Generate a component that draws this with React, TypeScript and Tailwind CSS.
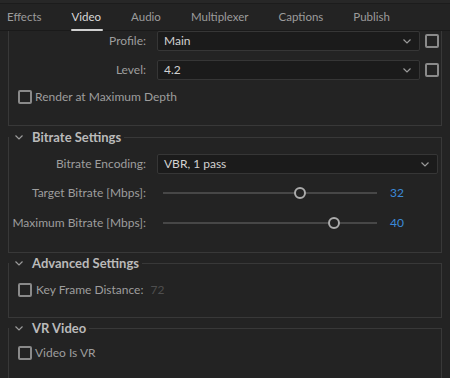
import React from "react";

const font = { fontFamily: "Lato, 'Noto Sans', sans-serif" };

function Chevron({ className = "" }: { className?: string }) {
  return (
    <svg width="8" height="5" viewBox="0 0 8 5" className={className}>
      <path d="M0.5 0.5 L4 4 L7.5 0.5" fill="none" stroke="#9a9a9a" strokeWidth="1.2" />
    </svg>
  );
}

function Checkbox() {
  return <div className="w-[14px] h-[14px] shrink-0 rounded-[2px] border-2 border-[#8a8a8a]" />;
}

function Select({ value, className = "" }: { value: string; className?: string }) {
  return (
    <div
      className={
        "h-[20px] flex items-center justify-between bg-[#1b1b1b] border border-[#363636] rounded-[2px] pl-[6px] pr-[8px] " +
        className
      }
    >
      <span className="text-[12px] text-[#d2d2d2] leading-none">{value}</span>
      <Chevron />
    </div>
  );
}

function Slider({ pct, value }: { pct: number; value: string }) {
  return (
    <div className="flex items-center h-[20px]">
      <div className="relative w-[214px] h-[20px] ml-[17px] flex items-center">
        <div className="w-full h-[2px] bg-[#474747]" />
        <div
          className="absolute top-[4px] w-[12px] h-[12px] -ml-[6px] rounded-full border-2 border-[#ababab] bg-[#232323]"
          style={{ left: `${pct}%` }}
        />
      </div>
      <span className="ml-[13px] text-[12px] text-[#3b8ad9]">{value}</span>
    </div>
  );
}

function Group({ title, className = "", children }: { title: string; className?: string; children: React.ReactNode }) {
  return (
    <fieldset className={"border border-[#383838] mx-[8px] px-0 " + className}>
      <legend className="flex items-center h-[18px] pl-[6px] pr-[3px]">
        <Chevron />
        <span className="ml-[9px] text-[13px] font-bold text-[#bababa] leading-[18px]">{title}</span>
      </legend>
      {children}
    </fieldset>
  );
}

function Label({ children }: { children: React.ReactNode }) {
  return <div className="w-[137px] shrink-0 text-right text-[12px] text-[#9e9e9e]">{children}</div>;
}

export default function App() {
  const tabs = ["Effects", "Video", "Audio", "Multiplexer", "Captions", "Publish"];
  return (
    <div className="w-[450px] h-[378px] overflow-hidden bg-[#232323]" style={font}>
      <div className="h-[4px] bg-[#272727] border-b border-[#1c1c1c]" />
      <div className="h-[27px] border-b border-[#1a1a1a] flex items-start pl-[7px] gap-[30px]">
        {tabs.map((t) => (
          <div key={t} className="relative h-[26px] flex items-center">
            <span className={"text-[11.5px] " + (t === "Video" ? "text-[#d8d8d8]" : "text-[#9c9c9c]")}>{t}</span>
            {t === "Video" && <div className="absolute left-[-1px] right-[-2px] bottom-[-1px] h-[2px] bg-[#d0d0d0] rounded-full" />}
          </div>
        ))}
      </div>

      <div className="mx-[8px] border-x border-b border-[#383838] pb-[18px]">
        <div className="flex items-center">
          <Label>Profile:</Label>
          <Select value="Main" className="ml-[11px] w-[263px]" />
          <div className="ml-[5px]"><Checkbox /></div>
        </div>
        <div className="flex items-center mt-[9px]">
          <Label>Level:</Label>
          <Select value="4.2" className="ml-[11px] w-[263px]" />
          <div className="ml-[5px]"><Checkbox /></div>
        </div>
        <div className="flex items-center h-[20px] mt-[7px] pl-[9px]">
          <Checkbox />
          <span className="ml-[3px] text-[12px] text-[#9e9e9e]">Render at Maximum Depth</span>
        </div>
      </div>

      <Group title="Bitrate Settings" className="mt-[2px] pb-[19px]">
        <div className="flex items-center mt-[8px]">
          <Label>Bitrate Encoding:</Label>
          <Select value="VBR, 1 pass" className="ml-[11px] w-[281px]" />
        </div>
        <div className="flex items-center mt-[9px]">
          <Label>Target Bitrate [Mbps]:</Label>
          <Slider pct={64} value="32" />
        </div>
        <div className="flex items-center mt-[10px]">
          <Label>Maximum Bitrate [Mbps]:</Label>
          <Slider pct={80} value="40" />
        </div>
      </Group>

      <Group title="Advanced Settings" className="mt-[1px] pb-[17px]">
        <div className="flex items-center h-[20px] mt-[8px] pl-[9px]">
          <Checkbox />
          <span className="ml-[4px] text-[12px] text-[#9e9e9e]">Key Frame Distance:</span>
          <span className="ml-[7px] text-[12px] text-[#4e4e4e]">72</span>
        </div>
      </Group>

      <Group title="VR Video" className="mt-[1px] pb-[30px]">
        <div className="flex items-center h-[20px] mt-[6px] pl-[9px]">
          <Checkbox />
          <span className="ml-[3px] text-[12px] text-[#9e9e9e]">Video Is VR</span>
        </div>
      </Group>
    </div>
  );
}
